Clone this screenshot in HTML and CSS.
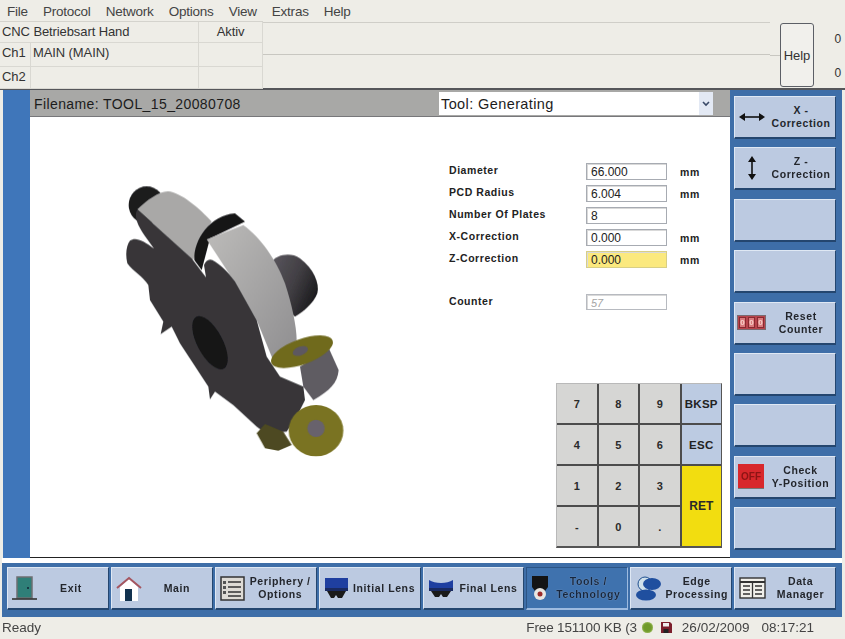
FILE: index.html
```html
<!DOCTYPE html>
<html lang="en">
<head>
<meta charset="utf-8">
<title>Tools / Technology</title>
<link rel="stylesheet" href="styles.css">
</head>
<body>
<div class="app">
  <nav class="menu">
    <span>File</span><span>Protocol</span><span>Network</span><span>Options</span><span>View</span><span>Extras</span><span>Help</span>
  </nav>
  <header class="head">
    <div class="status-grid">
      <div class="cell span2">CNC Betriebsart Hand</div><div class="cell center">Aktiv</div>
      <div class="cell">Ch1</div><div class="cell">MAIN (MAIN)</div><div class="cell"></div>
      <div class="cell">Ch2</div><div class="cell"></div><div class="cell"></div>
    </div>
    <div class="msg-area"></div>
    <button class="help">Help</button>
    <div class="zeros"><span>0</span><span>0</span></div>
  </header>
  <main class="main">
    <div class="strip"></div>
    <section class="center-pane">
      <div class="filebar">
        <div class="filename">Filename: TOOL_15_20080708</div>
        <div class="select"><span>Tool: Generating</span><i class="chev"><svg width="8" height="6" viewBox="0 0 8 6"><path d="M1 1l3 3 3-3" fill="none" stroke="#3a4a68" stroke-width="1.6"/></svg></i></div>
      </div>
      <div class="content">
        <svg class="tool3d" width="260" height="300" viewBox="0 0 780 900">
          <defs>
            <linearGradient id="cyl" x1="0" y1="0" x2="1" y2="0.6"><stop offset="0" stop-color="#5a575e"/><stop offset="0.55" stop-color="#423f44"/><stop offset="1" stop-color="#1c1c1e"/></linearGradient>
            <linearGradient id="band" x1="0" y1="0" x2="1" y2="1"><stop offset="0" stop-color="#bdbcba"/><stop offset="1" stop-color="#8f8e90"/></linearGradient>
            <filter id="soft"><feGaussianBlur stdDeviation="2"/></filter>
          </defs>
          <g filter="url(#soft)">
            <ellipse cx="140" cy="105" rx="54" ry="56" fill="#1b1b1d"/>
            <path d="M515 275C530 255 570 245 600 265C640 295 660 340 652 370C640 400 610 425 585 440L540 400Z" fill="url(#cyl)"/>
            <path d="M600 590L688 538L716 600C712 640 690 660 640 690L610 650Z" fill="#5e5b62"/>
            <path d="M112 118C140 90 180 62 205 64C240 66 300 115 335 155L295 215L280 270Z" fill="#a9a8a7"/>
            <path d="M283 270C280 210 330 135 405 130L435 155L330 205L305 300Z" fill="#151517"/>
            <path d="M320 208L430 165C480 200 530 270 555 340C575 400 590 470 590 510L520 572L470 450L400 330Z" fill="url(#band)"/>
            <path d="M112 118L275 265L318 322L312 285C318 270 330 262 345 275C375 295 390 315 405 335L470 450L500 560L540 620L610 650L615 690L590 740L560 785L500 792L470 770L400 705L345 665L330 688L325 650L240 520L215 470L182 492L190 455L150 390L145 345C130 320 100 305 82 280C75 250 80 225 90 212C105 200 130 210 162 236L135 198C115 170 100 140 112 118Z" fill="#373639"/>
            <ellipse cx="330" cy="518" rx="38" ry="88" transform="rotate(-28 330 518)" fill="#141416"/>
            <path d="M470 790L495 762L550 785L575 825L535 842L495 835Z" fill="#4d4920"/>
            <ellipse cx="606" cy="545" rx="98" ry="38" transform="rotate(-20 606 545)" fill="#706a1f"/>
            <ellipse cx="601" cy="543" rx="24" ry="13" transform="rotate(-20 601 543)" fill="#5d5860"/>
            <ellipse cx="648" cy="782" rx="82" ry="77" fill="#7a7322"/>
            <ellipse cx="648" cy="775" rx="26" ry="26" fill="#67626c"/>
          </g>
        </svg>
        <div class="form-col">
          <div class="form">
            <label>Diameter</label><div class="field">66.000</div><span>mm</span>
            <label>PCD Radius</label><div class="field">6.004</div><span>mm</span>
            <label>Number Of Plates</label><div class="field">8</div><span></span>
            <label>X-Correction</label><div class="field">0.000</div><span>mm</span>
            <label>Z-Correction</label><div class="field active">0.000</div><span>mm</span>
            <label class="counter">Counter</label><div class="field disabled counter">57</div><span class="counter"></span>
          </div>
          <div class="keypad">
            <button>7</button><button>8</button><button>9</button><button class="blue">BKSP</button>
            <button>4</button><button>5</button><button>6</button><button class="blue">ESC</button>
            <button>1</button><button>2</button><button>3</button><button class="ret">RET</button>
            <button>-</button><button>0</button><button>.</button>
          </div>
        </div>
      </div>
    </section>
    <aside class="softkeys">
      <button class="key"><svg width="26" height="12" viewBox="0 0 26 12"><path d="M4 6h18" stroke="#111" stroke-width="1.6"/><path d="M0 6l6-4v8zM26 6l-6-4v8z" fill="#111"/></svg><span>X -<br>Correction</span></button>
      <button class="key"><svg width="26" height="24" viewBox="0 0 26 24"><path d="M13 4v16" stroke="#111" stroke-width="1.6"/><path d="M13 0l-4 6h8zM13 24l-4-6h8z" fill="#111"/></svg><span>Z -<br>Correction</span></button>
      <button class="key"></button>
      <button class="key"></button>
      <button class="key"><i class="count"><b>0</b><b>0</b><b>0</b></i><span>Reset<br>Counter</span></button>
      <button class="key"></button>
      <button class="key"></button>
      <button class="key"><i class="off">OFF</i><span>Check<br>Y-Position</span></button>
      <button class="key"></button>
    </aside>
  </main>
  <footer class="bottom">
    <button class="tab"><svg width="26" height="25" viewBox="0 0 26 25"><rect x="5" y="1" width="15" height="21" fill="#2f7f78" stroke="#6d6f72" stroke-width="1.5"/><path d="M0 23h25" stroke="#333" stroke-width="1.6"/><circle cx="16" cy="12" r="1" fill="#123"/></svg><span class="ex">Exit</span></button>
    <button class="tab"><svg width="26" height="25" viewBox="0 0 26 25"><path d="M4 11v14h18V11L13 3z" fill="#fff"/><path d="M1 12L13 2l12 10" fill="none" stroke="#a5555f" stroke-width="2"/><rect x="9" y="13" width="7" height="12" fill="#12324f"/></svg><span>Main</span></button>
    <button class="tab"><svg width="25" height="25" viewBox="0 0 25 25"><rect x="1" y="1" width="23" height="23" fill="#dedbd5" stroke="#333" stroke-width="1.5"/><path d="M8 6h13M8 11h13M8 16h13M8 20h13" stroke="#333" stroke-width="1.5"/><path d="M3 5h3v3H3zM3 10h3v3H3zM3 15h3v3H3z" fill="#555"/></svg><span>Periphery /<br>Options</span></button>
    <button class="tab"><svg width="25" height="22" viewBox="0 0 25 22"><rect x="1" y="1" width="23" height="10" fill="#1f3fa0"/><path d="M1 11h23v3H1z" fill="#1a2a60"/><path d="M3 14h19l-4 7h-4l-2-3-2 3H7z" fill="#1a1a1a"/></svg><span>Initial Lens</span></button>
    <button class="tab"><svg width="26" height="20" viewBox="0 0 26 20"><path d="M1 2c6 4 18 4 24 0v8H1z" fill="#1f3fa0"/><path d="M1 10h24v3H1z" fill="#1a2a60"/><path d="M3 13h20l-4 6h-4l-2-3-2 3H7z" fill="#1a1a1a"/></svg><span>Final Lens</span></button>
    <button class="tab on"><svg width="18" height="25" viewBox="0 0 18 25"><path d="M1 0h16v11l-3 4H4l-3-4z" fill="#141414"/><circle cx="9" cy="18" r="6" fill="#e8e6e2"/><circle cx="9" cy="18" r="2.500" fill="#9a2b2b"/></svg><span>Tools /<br>Technology</span></button>
    <button class="tab"><svg width="27" height="25" viewBox="0 0 27 25"><circle cx="10" cy="8" r="7" fill="#cfe0ea" stroke="#1f4f8f"/><ellipse cx="17" cy="8" rx="9" ry="6" fill="#1f4f9f"/><ellipse cx="11" cy="19" rx="10" ry="5.500" fill="#1f4f9f"/></svg><span>Edge<br>Processing</span></button>
    <button class="tab"><svg width="27" height="22" viewBox="0 0 27 22"><rect x="1" y="1" width="25" height="20" fill="#f0efea" stroke="#333" stroke-width="1.4"/><path d="M1 5h25" stroke="#333" stroke-width="2"/><path d="M13.500 5v16M4 9h7M4 13h7M4 17h7M16 9h7M16 13h7M16 17h7" stroke="#333" stroke-width="1.3"/></svg><span>Data<br>Manager</span></button>
  </footer>
  <div class="statusbar">
    <span class="ready">Ready</span>
    <span class="free">Free 151100 KB (3</span>
    <i class="led"></i>
    <svg width="11" height="11" viewBox="0 0 11 11"><path d="M0 0h9l2 2v9H0z" fill="#7c1f2c"/><rect x="2" y="1" width="6" height="3.500" fill="#eee"/><rect x="2.500" y="7" width="5" height="4" fill="#222"/></svg>
    <span class="date">26/02/2009</span>
    <span class="time">08:17:21</span>
  </div>
</div>
</body>
</html>
```

FILE: styles.css
```css
* { box-sizing: border-box; }
html, body { margin: 0; padding: 0; background: #eeede7; }
body { width: 845px; height: 639px; overflow: hidden; font-family: "Liberation Sans", Arial, sans-serif; }
button { font-family: inherit; margin: 0; padding: 0; }

.app { width: 845px; height: 639px; display: flex; flex-direction: column; background: #eeede7; filter: blur(0.45px); }

.menu { height: 21px; display: flex; gap: 15px; padding: 3px 0 0 7px; font-size: 13.500px; color: #444; letter-spacing: -0.22px; line-height: 17px; }

.head { height: 67px; display: flex; position: relative; font-size: 13px; color: #333; letter-spacing: -0.1px; }
.status-grid { width: 263px; display: grid; grid-template-columns: 31px 168px 64px; grid-template-rows: 21px 24px 22px; border-top: 1px solid #d4d3cd; }
.cell { border-right: 1px solid #d9d8d2; border-bottom: 1px solid #d9d8d2; padding: 2px 0 0 2px; line-height: 16px; white-space: nowrap; }
.span2 { grid-column: span 2; }
.center { text-align: center; padding-left: 0; }
.msg-area { width: 507px; margin-top: 1px; height: 33px; border-top: 1px solid #cfcec8; border-bottom: 1px solid #c8c7c1; }
.head::after { content: ""; position: absolute; left: 770px; top: 34px; width: 10px; border-top: 1px solid #c8c7c1; }
.help { width: 34px; height: 64px; margin: 2px 0 0 10px; background: #f1f0ec; border: 1px solid #5c5f66; border-radius: 3px; font-size: 13px; color: #333; letter-spacing: -0.1px; }
.zeros { flex: 1; display: flex; flex-direction: column; align-items: flex-end; padding: 10px 4px 0 0; gap: 18px; font-size: 12px; line-height: 16px; }

.main { height: 470px; display: flex; padding-left: 3px; border-top: 2px solid #55565a; }
.strip { width: 27px; background: #3f76ba; }
.center-pane { width: 700px; display: flex; flex-direction: column; background: #fff; border-bottom: 1px solid #222; }
.filebar { height: 27px; background: #a8a8a6; border-bottom: 1px solid #77777a; display: flex; align-items: center; justify-content: space-between; padding: 1px 17px 0 4px; }
.filename { font-size: 14px; color: #1c1c1c; letter-spacing: 0.4px; }
.select { width: 274px; height: 23px; background: #fff; display: flex; align-items: center; justify-content: space-between; padding-left: 2px; font-size: 14.500px; color: #1c1c1c; letter-spacing: 0.4px; }
.chev { width: 14px; height: 23px; background: #e3e9f4; display: flex; align-items: center; justify-content: center; }

.content { flex: 1; display: flex; min-height: 0; }
.tool3d { flex: none; margin: 53px 0 0 70px; }
.form-col { margin: 46px 0 0 89px; display: flex; flex-direction: column; }
.form { display: grid; grid-template-columns: 137px 81px auto; grid-auto-rows: 22px; font-size: 10.500px; font-weight: bold; color: #222; letter-spacing: 0.55px; }
.form label { line-height: 15px; }
.form span { padding: 2px 0 0 13px; line-height: 15px; font-size: 10.500px; }
.field { height: 17px; border: 1px solid #a7abb2; background: #fff; padding-left: 4px; font-size: 12px; font-weight: normal; line-height: 16px; color: #222; letter-spacing: 0; box-shadow: inset 1px 1px 0 #d9d9d9; }
.active { background: #fbe97e; border-color: #d8cf85; }
.disabled { color: #a5a5a5; font-style: italic; font-size: 11px; border-color: #b7bac0; height: 16px; }
.counter { margin-top: 21px; }

.keypad { margin: 88px 0 0 107px; width: 166px; height: 165px; display: grid; grid-template-columns: repeat(4, 1fr); grid-template-rows: repeat(4, 1fr); gap: 2px; background: #4c4c4c; border-top: 1px solid #b9b9b9; border-left: 1px solid #b9b9b9; border-bottom: 2px solid #555; border-right: 1px solid #555; }
.keypad button { border: 0; background: #d6d6d4; font-size: 11px; font-weight: bold; color: #2a2a2a; }
.keypad .blue { background: #bccbe2; font-size: 11.500px; letter-spacing: 0.3px; color: #222; }
.keypad .ret { background: #f2dd10; grid-row: span 2; font-size: 12px; }

.softkeys { width: 112px; background: #3e6ea8; padding: 6px 6px 0 4px; display: grid; grid-auto-rows: 43px; row-gap: 8.400px; align-content: start; }
.key, .tab { background: #bccae1; border: 0; border-top: 1px solid #dfe8f4; border-left: 1px solid #dfe8f4; border-right: 1px solid #24466f; border-bottom: 2px solid #24466f; display: flex; align-items: center; font-weight: bold; font-size: 10.500px; line-height: 13px; color: #23262c; letter-spacing: 0.6px; }
.key svg { flex: none; margin-left: 4px; }
.key span { flex: 1; text-align: center; padding-left: 2px; }
.count { flex: none; width: 27px; height: 13px; margin-left: 3px; background: #b8444c; display: flex; justify-content: space-between; padding: 1px; font-style: normal; outline: 1px solid #7a6a70; }
.count b { width: 7px; height: 11px; background: #d9797c; border: 1px solid #8a2a30; font-size: 8px; line-height: 9px; color: #f7d0c8; text-align: center; letter-spacing: 0; }
.off { flex: none; width: 26px; height: 25px; margin-left: 3px; background: #d8282c; font-style: normal; font-size: 10px; line-height: 25px; letter-spacing: 0; color: #8d1414; text-align: center; border-bottom: 1px solid #777; }

.bottom { height: 59px; margin: 0 3px 0 2px; background: #3e6ea8; border-top: 5px solid #fff; padding: 4px 6px 0 5px; display: flex; gap: 2px; }
.tab { flex: 1 1 0; height: 43px; padding-left: 4px; }
.tab svg { flex: none; }
.tab span { flex: 1; text-align: center; }
.tab .ex { padding-right: 4px; }
.tab.on { background: #3f72ae; color: #16263e; border-top-color: #2c5485; border-left-color: #2c5485; border-right-color: #9ebbe0; border-bottom-color: #9ebbe0; text-shadow: 0 0 1px #9fb8d8; }

.statusbar { flex: 1; display: flex; align-items: center; font-size: 13.500px; color: #444; letter-spacing: 0; padding: 0 0 2px 2px; }
.ready { margin-right: auto; }
.free { letter-spacing: -0.15px; }
.led { width: 11px; height: 11px; border-radius: 50%; background: #6f9a2a; margin: 0 8px 0 5px; box-shadow: inset 0 0 2px #c8dc90; }
.date { margin: 0 0 0 10px; }
.time { margin: 0 31px 0 12px; }
```
